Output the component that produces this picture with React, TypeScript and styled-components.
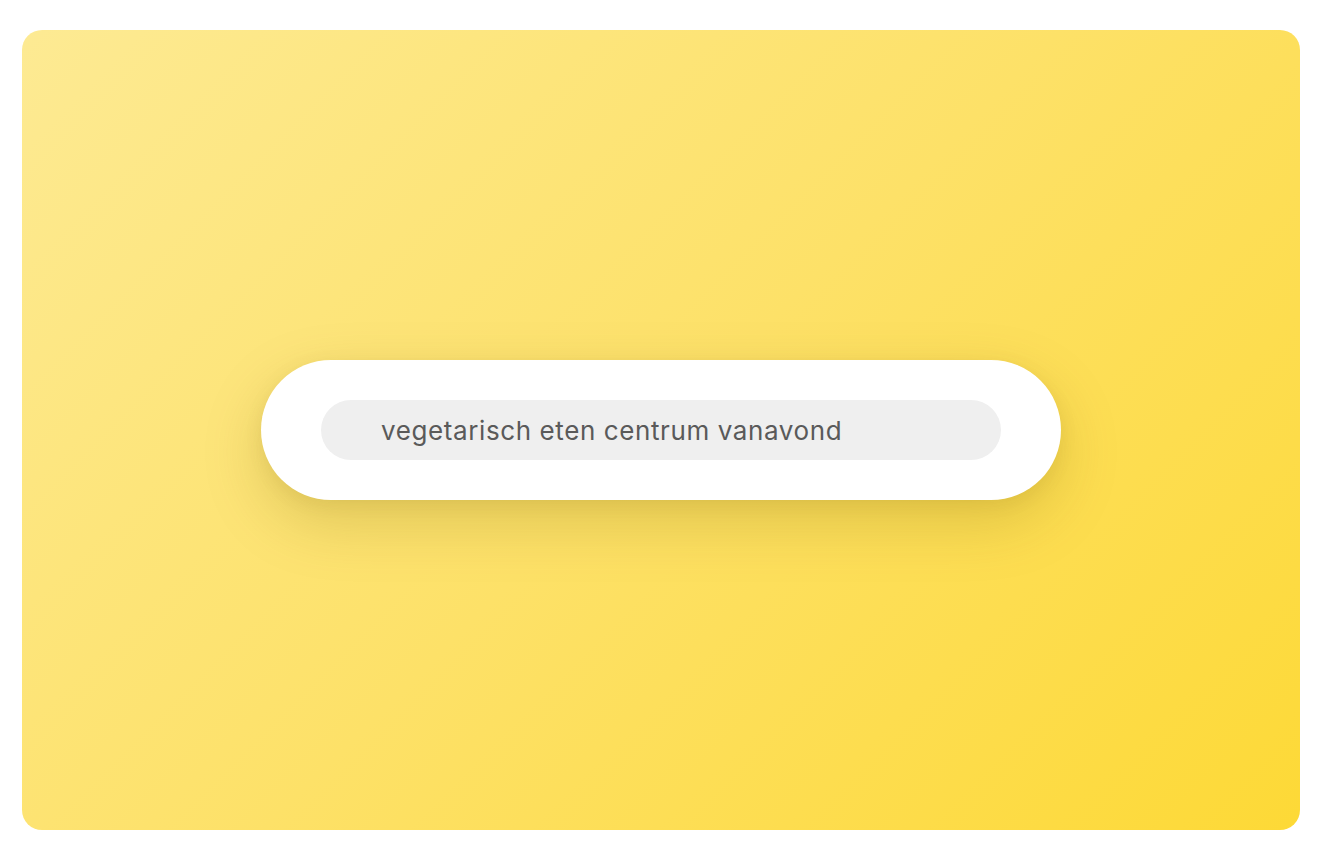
import { createGlobalStyle } from "styled-components";
import styled from "styled-components";

const GlobalStyle = createGlobalStyle`
  html, body {
    margin: 0;
    padding: 0;
    background: #ffffff;
    font-family: Inter, "Noto Sans", sans-serif;
  }
`;

const Page = styled.div`
  padding: 30px 38px 28px 22px;
`;

const Card = styled.div`
  width: 1278px;
  height: 800px;
  border-radius: 20px;
  background: linear-gradient(135deg, #fdea93 0%, #fde168 50%, #fdd936 100%);
  display: flex;
  align-items: center;
  justify-content: center;
`;

const SearchShell = styled.div`
  width: 800px;
  height: 140px;
  box-sizing: border-box;
  padding: 40px 60px;
  border-radius: 70px;
  background: #ffffff;
  box-shadow: 0 22px 60px rgba(120, 95, 0, 0.22), 0 4px 18px rgba(120, 95, 0, 0.08);
`;

const SearchInput = styled.input`
  width: 100%;
  height: 60px;
  box-sizing: border-box;
  border: none;
  outline: none;
  border-radius: 30px;
  background: #efefef;
  padding: 0 60px;
  font-family: Inter, "Noto Sans", sans-serif;
  font-size: 26px;
  letter-spacing: 0.6px;
  color: #5a5a5a;
`;

const App = () => {
    return (
        <>
            <GlobalStyle />
            <Page>
                <Card>
                    <SearchShell>
                        <SearchInput defaultValue="vegetarisch eten centrum vanavond" />
                    </SearchShell>
                </Card>
            </Page>
        </>
    );
};

export default App;
